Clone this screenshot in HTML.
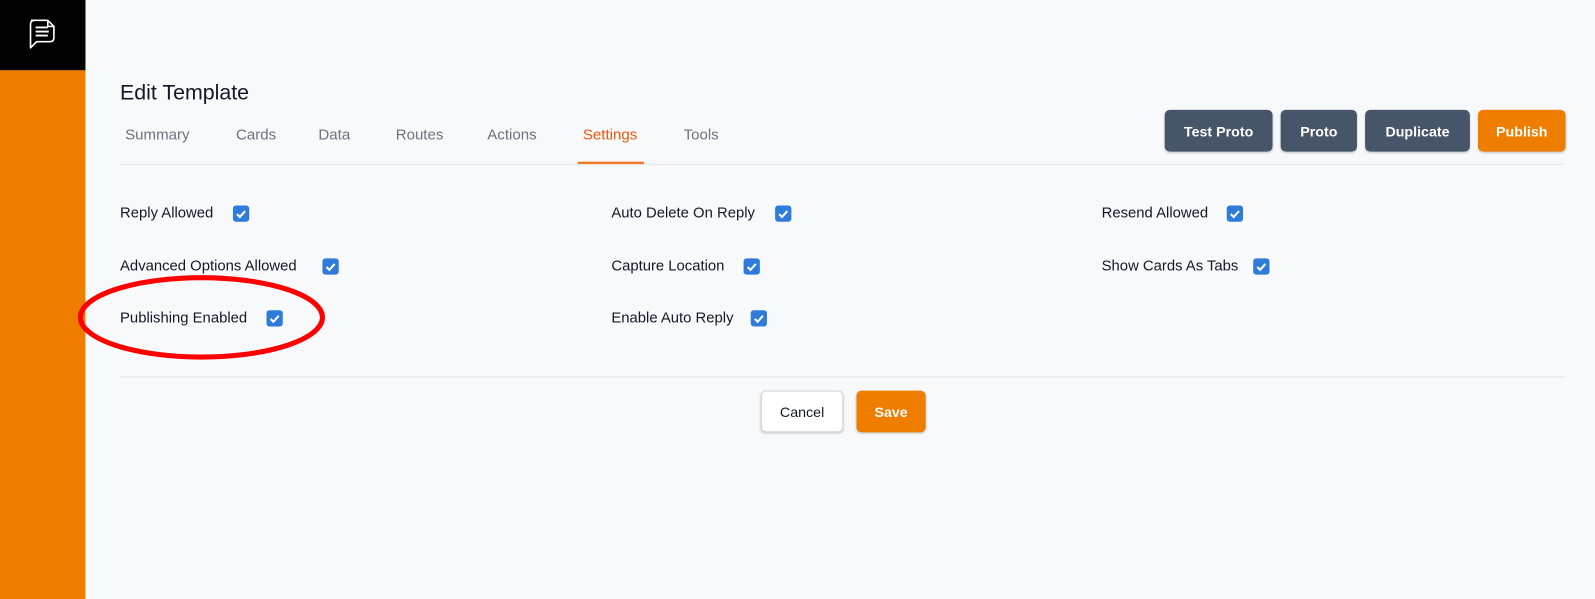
<!DOCTYPE html>
<html><head><style>
*{margin:0;padding:0;box-sizing:border-box}
body{width:1595px;height:589px;background:#f8f9fb;font-family:"Liberation Sans",sans-serif;position:relative;overflow:hidden}
#w{position:absolute;left:0;top:0;width:1568px;height:580px;transform:scale(1.01722);transform-origin:0 0}
.sb{position:absolute;left:0;top:0;width:84px;height:589px;background:#ee7d00}
.sbt{position:absolute;left:0;top:0;width:84px;height:69px;background:#000}
.a{position:absolute;white-space:nowrap}
.tab{font-size:14.8px;color:#6b7280;top:125px}
.btn{position:absolute;top:108px;height:41px;border-radius:5px;background:#475569;color:#fff;font-weight:bold;font-size:14px;display:flex;align-items:center;justify-content:center;box-shadow:0 1px 2px rgba(0,0,0,.2)}
.lbl{font-size:14.6px;color:#111827;height:16px;line-height:16px}
.cb{position:absolute;width:16px;height:16px;background:#2f7bd9;border-radius:3px}
.hr{position:absolute;left:118px;width:1421px;height:1px;background:#e3e5e9}
</style></head><body><div id="w">
<div class="sb"></div><div class="sbt"></div>
<svg class="a" style="left:26px;top:17px" width="32" height="34" viewBox="0 0 32 34" fill="none" stroke="#fff" stroke-width="1.6" stroke-linejoin="round"><path d="M5 3h16l6 6v11q0 4-4 4H10l-6 6V7q0-4 4-4z"/><path d="M21 3v6h6"/><path d="M9 10h12M9 14h13M9 18h12" stroke-width="1.8"/></svg>
<div class="a" style="left:118px;top:80px;font-size:21px;color:#111827">Edit Template</div>
<div class="a tab" style="left:123px">Summary</div>
<div class="a tab" style="left:232px">Cards</div>
<div class="a tab" style="left:313px">Data</div>
<div class="a tab" style="left:389px">Routes</div>
<div class="a tab" style="left:479px">Actions</div>
<div class="a tab" style="left:573px;color:#ea580c">Settings</div>
<div class="a" style="left:568px;top:159px;width:65px;height:3px;background:#f26c0d"></div>
<div class="a tab" style="left:672px">Tools</div>
<div class="btn" style="left:1145px;width:106px">Test Proto</div>
<div class="btn" style="left:1259px;width:75px">Proto</div>
<div class="btn" style="left:1342px;width:103px">Duplicate</div>
<div class="btn" style="left:1453px;width:86px;background:#ee7d00">Publish</div>
<div class="hr" style="top:161px"></div>

<div class="a lbl" style="left:118px;top:202px">Reply Allowed</div>
<div class="a lbl" style="left:118px;top:254px">Advanced Options Allowed</div>
<div class="a lbl" style="left:118px;top:305px">Publishing Enabled</div>
<div class="a lbl" style="left:601px;top:202px">Auto Delete On Reply</div>
<div class="a lbl" style="left:601px;top:254px">Capture Location</div>
<div class="a lbl" style="left:601px;top:305px">Enable Auto Reply</div>
<div class="a lbl" style="left:1083px;top:202px">Resend Allowed</div>
<div class="a lbl" style="left:1083px;top:254px">Show Cards As Tabs</div>

<div class="cb" style="left:229px;top:202px"><svg width="16" height="16"><path d="M4 8.5l2.8 2.8L12 5.5" stroke="#fff" stroke-width="2" fill="none"/></svg></div>
<div class="cb" style="left:317px;top:254px"><svg width="16" height="16"><path d="M4 8.5l2.8 2.8L12 5.5" stroke="#fff" stroke-width="2" fill="none"/></svg></div>
<div class="cb" style="left:262px;top:305px"><svg width="16" height="16"><path d="M4 8.5l2.8 2.8L12 5.5" stroke="#fff" stroke-width="2" fill="none"/></svg></div>
<div class="cb" style="left:762px;top:202px"><svg width="16" height="16"><path d="M4 8.5l2.8 2.8L12 5.5" stroke="#fff" stroke-width="2" fill="none"/></svg></div>
<div class="cb" style="left:731px;top:254px"><svg width="16" height="16"><path d="M4 8.5l2.8 2.8L12 5.5" stroke="#fff" stroke-width="2" fill="none"/></svg></div>
<div class="cb" style="left:738px;top:305px"><svg width="16" height="16"><path d="M4 8.5l2.8 2.8L12 5.5" stroke="#fff" stroke-width="2" fill="none"/></svg></div>
<div class="cb" style="left:1206px;top:202px"><svg width="16" height="16"><path d="M4 8.5l2.8 2.8L12 5.5" stroke="#fff" stroke-width="2" fill="none"/></svg></div>
<div class="cb" style="left:1232px;top:254px"><svg width="16" height="16"><path d="M4 8.5l2.8 2.8L12 5.5" stroke="#fff" stroke-width="2" fill="none"/></svg></div>

<svg class="a" style="left:76px;top:270px" width="250" height="86"><ellipse cx="122" cy="42" rx="119" ry="39" fill="none" stroke="#f00" stroke-width="5"/></svg>

<div class="hr" style="top:370px"></div>
<div class="btn" style="left:748px;top:384px;width:81px;background:#fff;color:#111827;font-weight:normal;border:1px solid #d1d5db">Cancel</div>
<div class="btn" style="left:842px;top:384px;width:68px;background:#ee7d00">Save</div>
</div></body></html>
